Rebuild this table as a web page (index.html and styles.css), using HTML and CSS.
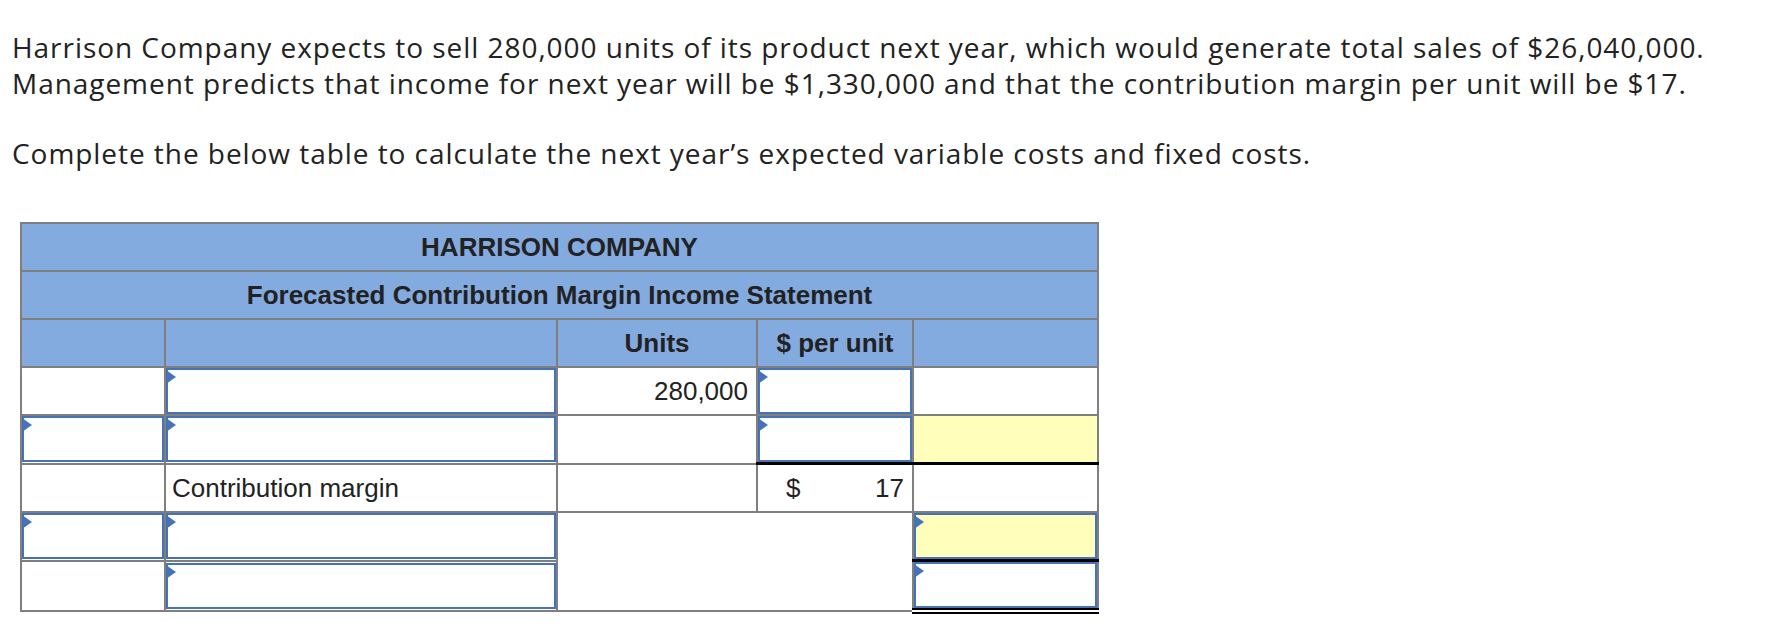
FILE: index.html
```html
<!DOCTYPE html>
<html>
<head>
<meta charset="utf-8">
<link rel="stylesheet" href="styles.css">
</head>
<body>
<div class="page">
  <p class="q">Harrison Company expects to sell 280,000 units of its product next year, which would generate total sales of $26,040,000.<br>Management predicts that income for next year will be $1,330,000 and that the contribution margin per unit will be $17.</p>
  <p class="q q2">Complete the below table to calculate the next year’s expected variable costs and fixed costs.</p>
  <table class="sheet">
    <colgroup><col class="c1"><col class="c2"><col class="c3"><col class="c4"><col class="c5"></colgroup>
    <tr class="hd"><th colspan="5">HARRISON COMPANY</th></tr>
    <tr class="hd"><th colspan="5">Forecasted Contribution Margin Income Statement</th></tr>
    <tr class="hd"><th></th><th></th><th>Units</th><th>$ per unit</th><th></th></tr>
    <tr><td></td><td><div class="in"></div></td><td class="num">280,000</td><td><div class="in"></div></td><td></td></tr>
    <tr><td><div class="in"></div></td><td><div class="in"></div></td><td></td><td class="ul"><div class="in"></div></td><td class="ul yel"></td></tr>
    <tr><td></td><td class="lbl">Contribution margin</td><td></td><td><div class="money"><span>$</span><span>17</span></div></td><td></td></tr>
    <tr><td><div class="in"></div></td><td><div class="in"></div></td><td colspan="2" rowspan="2"></td><td class="ul"><div class="in yel"></div></td></tr>
    <tr><td></td><td><div class="in"></div></td><td class="dul"><div class="in"></div></td></tr>
  </table>
</div>
</body>
</html>
```
FILE: styles.css
```css
html, body {
  margin: 0;
  padding: 0;
  background: #fff;
}
.page {
  padding: 29px 12px 0 12px;
}
.q {
  margin: 0;
  font-family: "Open Sans", Lato, sans-serif;
  font-size: 28px;
  line-height: 36px;
  letter-spacing: 0.95px;
  color: #222;
  white-space: nowrap;
}
.q2 {
  margin-top: 34px;
}
.sheet {
  border-collapse: collapse;
  table-layout: fixed;
  width: 1079px;
  margin: 51px 0 0 8px;
  font-family: "Liberation Sans", Arial, sans-serif;
  font-size: 26px;
  color: #222;
}
.c1 { width: 144px; }
.c2 { width: 392px; }
.c3 { width: 200px; }
.c4 { width: 156px; }
.c5 { width: 185px; }
.sheet td, .sheet th {
  border: 2px solid #7f7f7f;
  padding: 0;
  line-height: 46px;
  vertical-align: middle;
}
.hd th {
  background: #83abe0;
  font-weight: bold;
  text-align: center;
}
.num {
  text-align: right;
  padding-right: 8px !important;
}
.lbl {
  padding-left: 6px !important;
}
.money {
  display: flex;
  justify-content: space-between;
  padding: 0 8px 0 28px;
}
.in {
  position: relative;
  box-sizing: border-box;
  height: 46px;
  border: 2px solid #4672b8;
  background: #fff;
}
.in::before {
  content: "";
  position: absolute;
  left: -2px;
  top: 0;
  width: 0;
  height: 0;
  border-left: 10px solid #4672b8;
  border-top: 7px solid transparent;
  border-bottom: 7px solid transparent;
}
.sheet .yel, .in.yel {
  background: #ffffbb;
}
.sheet td.ul {
  border-bottom: 3px solid #000;
}
.sheet td.dul {
  border-bottom: 6px double #000;
}
```
